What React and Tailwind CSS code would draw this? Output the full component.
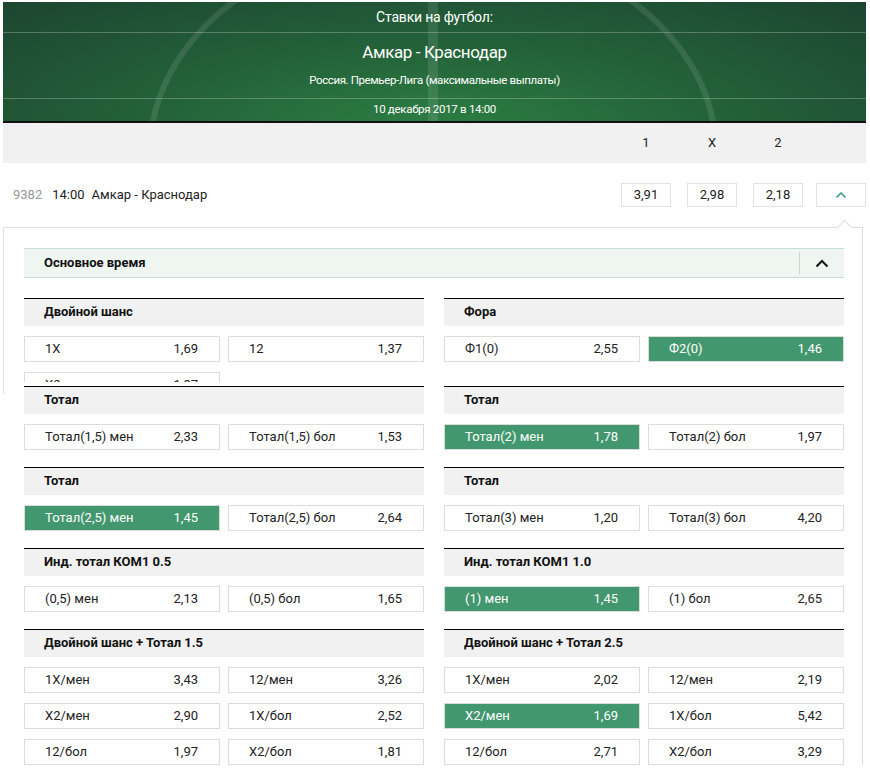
import React from "react";

function Cell({ label, value, sel }) {
  return (
    <div
      className={
        sel
          ? "h-[26px] flex items-center justify-between pl-[20px] pr-[21px] text-[13px] border border-[#dcdcdc] bg-[#43976e] text-white"
          : "h-[26px] flex items-center justify-between pl-[20px] pr-[21px] text-[13px] border border-[#dcdcdc] bg-white text-[#222]"
      }
    >
      <span>{label}</span>
      <span>{value}</span>
    </div>
  );
}

function Section({ title, cells }) {
  return (
    <div>
      <div className="h-[28px] border-t border-black bg-[#f1f1f1] pl-[20px] pb-[1px] flex items-center font-bold text-[13px] text-[#111]">
        {title}
      </div>
      <div className="mt-[10px] grid grid-cols-2 gap-x-[8px] gap-y-[10px]">
        {cells.map((c, i) => (
          <Cell key={i} label={c[0]} value={c[1]} sel={c[2]} />
        ))}
      </div>
    </div>
  );
}

function Row({ h, left, right }) {
  return (
    <div className={h}>
      <div className="grid grid-cols-2 gap-x-[20px] h-full">
        <div className="overflow-hidden">
          <Section title={left.title} cells={left.cells} />
        </div>
        <div className="overflow-hidden">
          <Section title={right.title} cells={right.cells} />
        </div>
      </div>
    </div>
  );
}

function Banner() {
  return (
    <div className="relative h-[121px] overflow-hidden border-b-2 border-[#111] bg-[radial-gradient(ellipse_at_50%_110%,#2c8043_0%,#24633a_45%,#1c4530_100%)] text-white">
      <svg className="absolute inset-0" width="863" height="121" viewBox="0 0 863 121">
        <ellipse cx="430" cy="150" rx="283" ry="212" fill="none" stroke="rgba(255,255,255,0.10)" strokeWidth="6" />
        <rect x="425" y="0" width="10" height="121" fill="rgba(255,255,255,0.10)" />
      </svg>
      <div className="relative flex flex-col">
        <div className="h-[30px] flex items-center justify-center text-[14px] tracking-[-0.2px]">Ставки на футбол:</div>
        <div className="h-px bg-white/25" />
        <div className="h-[65px] flex flex-col items-center">
          <div className="mt-[9px] h-[22px] flex items-center text-[17px] tracking-[-0.4px]">Амкар - Краснодар</div>
          <div className="mt-[9px] h-[16px] flex items-center text-[11.5px] tracking-[-0.4px]">
            Россия. Премьер-Лига (максимальные выплаты)
          </div>
        </div>
        <div className="h-px bg-white/25" />
        <div className="h-[22px] flex items-center justify-center text-[11.5px] tracking-[-0.3px]">10 декабря 2017 в 14:00</div>
      </div>
    </div>
  );
}

export default function App() {
  const rows = [
    {
      h: "h-[84px] mb-[4px]",
      left: { title: "Двойной шанс", cells: [["1X", "1,69"], ["12", "1,37"], ["X2", "1,87"]] },
      right: { title: "Фора", cells: [["Ф1(0)", "2,55"], ["Ф2(0)", "1,46", true]] },
    },
    {
      h: "h-[81px]",
      left: { title: "Тотал", cells: [["Тотал(1,5) мен", "2,33"], ["Тотал(1,5) бол", "1,53"]] },
      right: { title: "Тотал", cells: [["Тотал(2) мен", "1,78", true], ["Тотал(2) бол", "1,97"]] },
    },
    {
      h: "h-[81px]",
      left: { title: "Тотал", cells: [["Тотал(2,5) мен", "1,45", true], ["Тотал(2,5) бол", "2,64"]] },
      right: { title: "Тотал", cells: [["Тотал(3) мен", "1,20"], ["Тотал(3) бол", "4,20"]] },
    },
    {
      h: "h-[81px]",
      left: { title: "Инд. тотал КОМ1 0.5", cells: [["(0,5) мен", "2,13"], ["(0,5) бол", "1,65"]] },
      right: { title: "Инд. тотал КОМ1 1.0", cells: [["(1) мен", "1,45", true], ["(1) бол", "2,65"]] },
    },
    {
      h: "",
      left: {
        title: "Двойной шанс + Тотал 1.5",
        cells: [["1X/мен", "3,43"], ["12/мен", "3,26"], ["X2/мен", "2,90"], ["1X/бол", "2,52"], ["12/бол", "1,97"], ["X2/бол", "1,81"]],
      },
      right: {
        title: "Двойной шанс + Тотал 2.5",
        cells: [["1X/мен", "2,02"], ["12/мен", "2,19"], ["X2/мен", "1,69", true], ["1X/бол", "5,42"], ["12/бол", "2,71"], ["X2/бол", "3,29"]],
      },
    },
  ];

  return (
    <div className="w-[870px] h-[774px] overflow-hidden bg-white pl-[3px] pt-[2px] font-['Roboto','Liberation_Sans',sans-serif] text-[#222]">
      <div className="w-[863px]">
        <Banner />
        <div className="h-[40px] bg-[#f1f1f1] flex items-center justify-end text-[13px] text-[#222]">
          <div className="flex items-center gap-x-[16px]">
            <span className="w-[50px] text-center">1</span>
            <span className="w-[50px] text-center">X</span>
            <span className="w-[50px] text-center">2</span>
          </div>
          <span className="w-[50px] ml-[13px]" />
        </div>
        <div className="h-[64px] flex items-center justify-between pl-[10px] text-[13px]">
          <div className="flex items-center">
            <span className="text-[#999]">9382</span>
            <span className="ml-[10px]">14:00</span>
            <span className="ml-[7px]">Амкар - Краснодар</span>
          </div>
          <div className="flex items-center">
            <div className="flex items-center gap-x-[16px]">
              <div className="w-[50px] h-[24px] border border-[#e2e2e2] flex items-center justify-center">3,91</div>
              <div className="w-[50px] h-[24px] border border-[#e2e2e2] flex items-center justify-center">2,98</div>
              <div className="w-[50px] h-[24px] border border-[#e2e2e2] flex items-center justify-center">2,18</div>
            </div>
            <div className="ml-[13px] w-[50px] h-[24px] border border-[#e2e2e2] flex items-center justify-center">
              <svg width="12" height="8" viewBox="0 0 12 8">
                <path d="M1.5 6.5 L6 2 L10.5 6.5" fill="none" stroke="#2a9a88" strokeWidth="1.5" />
              </svg>
            </div>
          </div>
        </div>
        <div className="relative w-[860px] border-t border-r border-[#dedede] pl-[21px] pr-[18px] pt-[20px]">
          <span className="absolute left-0 top-0 h-[166px] w-px bg-[#dedede]" />
          <span className="absolute right-[12px] -top-[6px] w-[11px] h-[11px] rotate-45 border-l border-t border-[#dedede] bg-white" />
          <div className="h-[30px] border-y border-[#c8dcdc] bg-[#eff5f1] flex items-center justify-between pl-[20px]">
            <span className="font-bold text-[13px] text-[#111]">Основное время</span>
            <div className="flex items-center h-full">
              <span className="w-px h-[22px] bg-[#c8d8d8]" />
              <div className="w-[44px] flex items-center justify-center">
                <svg width="14" height="9" viewBox="0 0 14 9">
                  <path d="M1.5 7.5 L7 2 L12.5 7.5" fill="none" stroke="#111" strokeWidth="2" />
                </svg>
              </div>
            </div>
          </div>
          <div className="mt-[20px] flex flex-col">
            {rows.map((r, i) => (
              <Row key={i} h={r.h} left={r.left} right={r.right} />
            ))}
          </div>
        </div>
      </div>
    </div>
  );
}
